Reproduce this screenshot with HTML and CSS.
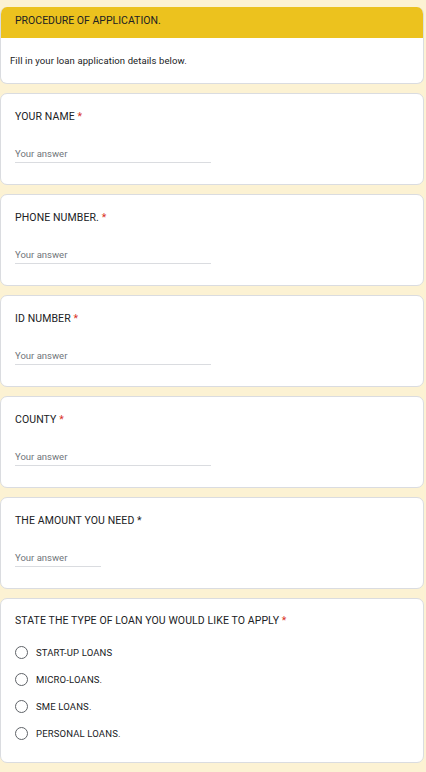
FILE: index.html
```html
<!DOCTYPE html>
<html lang="en">
<head>
<meta charset="utf-8">
<title>Loan Application</title>
<link rel="stylesheet" href="styles.css">
</head>
<body>
<main class="form">
  <section class="card intro">
    <div class="intro-head">PROCEDURE OF APPLICATION.</div>
    <div class="intro-body">Fill in your loan application details below.</div>
  </section>

  <section class="card question">
    <div class="q-title">YOUR NAME <span class="req">*</span></div>
    <div class="answer">Your answer</div>
  </section>

  <section class="card question">
    <div class="q-title">PHONE NUMBER. <span class="req">*</span></div>
    <div class="answer">Your answer</div>
  </section>

  <section class="card question">
    <div class="q-title">ID NUMBER <span class="req">*</span></div>
    <div class="answer">Your answer</div>
  </section>

  <section class="card question">
    <div class="q-title">COUNTY <span class="req">*</span></div>
    <div class="answer">Your answer</div>
  </section>

  <section class="card question">
    <div class="q-title">THE AMOUNT YOU NEED *</div>
    <div class="answer short">Your answer</div>
  </section>

  <section class="card question choice">
    <div class="q-title">STATE THE TYPE OF LOAN YOU WOULD LIKE TO APPLY <span class="req">*</span></div>
    <ul class="options">
      <li class="option"><span class="radio"></span>START-UP LOANS</li>
      <li class="option"><span class="radio"></span>MICRO-LOANS.</li>
      <li class="option"><span class="radio"></span>SME LOANS.</li>
      <li class="option"><span class="radio"></span>PERSONAL LOANS.</li>
    </ul>
  </section>

  <section class="card question">
    <div class="q-title">&nbsp;</div>
  </section>
</main>
</body>
</html>
```

FILE: styles.css
```css
html, body {
  margin: 0;
  padding: 0;
}

body {
  background: #fcf2d3;
  font-family: Roboto, "Noto Sans", "Liberation Sans", sans-serif;
  color: #202124;
  overflow: hidden;
}

.form {
  display: flex;
  flex-direction: column;
  gap: 9px;
  padding-top: 7px;
  width: 424px;
}

.card {
  background: #ffffff;
  border: 1px solid #dadce0;
  border-radius: 7px;
  box-sizing: border-box;
}

.intro {
  overflow: hidden;
  border-top: none;
}

.intro-head {
  background: #ecc21e;
  height: 31px;
  box-sizing: border-box;
  padding-left: 14px;
  font-size: 10.5px;
  line-height: 14px;
  padding-top: 7px;
}

.intro-body {
  height: 45px;
  box-sizing: border-box;
  padding: 16px 0 0 9px;
  font-size: 9.5px;
  letter-spacing: 0.1px;
  line-height: 14px;
}

.question {
  padding: 16px 14px 21px 14px;
  height: 92px;
}

.q-title {
  font-size: 10.5px;
  line-height: 14px;
  letter-spacing: 0.1px;
}

.req {
  color: #d93025;
}

.answer {
  margin-top: 23px;
  width: 196px;
  font-size: 9.5px;
  line-height: 14px;
  color: #70757a;
  padding-bottom: 1px;
  border-bottom: 1px solid #dadce0;
}

.answer.short {
  width: 86px;
}

.choice {
  height: 165px;
  padding-top: 15px;
}

.options {
  list-style: none;
  margin: 11px 0 0 0;
  padding: 0;
}

.option {
  display: flex;
  align-items: center;
  height: 27px;
  font-size: 9.5px;
  letter-spacing: 0.15px;
  gap: 8px;
}

.radio {
  width: 13px;
  height: 13px;
  border: 1.5px solid #5f6368;
  border-radius: 50%;
  box-sizing: border-box;
  flex: none;
}
```
